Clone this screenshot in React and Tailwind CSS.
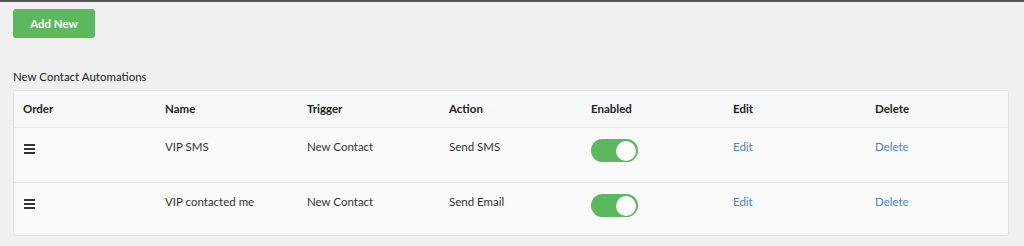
import React from 'react';

const rows = [
  { name: 'VIP SMS', trigger: 'New Contact', action: 'Send SMS' },
  { name: 'VIP contacted me', trigger: 'New Contact', action: 'Send Email' },
];

const Toggle = () => (
  <div className="w-[47px] h-[23px] rounded-full bg-[#5cb85c] flex items-center justify-end pr-[2px]">
    <div className="w-[20px] h-[20px] rounded-full bg-white" />
  </div>
);

const Grip = () => (
  <div className="flex flex-col gap-[2px] w-[11px]">
    <div className="h-[2px] bg-[#333]" />
    <div className="h-[2px] bg-[#333]" />
    <div className="h-[2px] bg-[#333]" />
  </div>
);

const App = () => {
  return (
    <div className="w-[1024px] h-[246px] bg-[#f0f0f0] border-t-2 border-[#555] font-['Lato','Liberation_Sans',sans-serif] text-[11.5px] text-[#333] overflow-hidden">
      {/* Toolbar */}
      <div className="px-[13px] pt-[7px]">
        <button className="w-[82px] h-[29px] bg-[#5cb85c] rounded-[3px] text-white font-bold text-[11.5px]">
          Add New
        </button>
      </div>

      <div className="px-[13px] mt-[31px] leading-[16px] text-[#222]">New Contact Automations</div>

      {/* Table card */}
      <div className="mx-[13px] mt-[5px] w-[996px] border border-[#e2e2e2] rounded-[3px] bg-[#fafafa]">
        <div className="grid grid-cols-7 h-[37px] items-center bg-[#f7f8fa] border-b border-[#e8e8e8] font-bold text-[#222]">
          {['Order', 'Name', 'Trigger', 'Action', 'Enabled', 'Edit', 'Delete'].map((h) => (
            <div key={h} className="pl-[9px]">{h}</div>
          ))}
        </div>
        {rows.map((r, i) => (
          <div
            key={r.name}
            className={`grid grid-cols-7 items-start pt-[11px] ${i === 0 ? 'h-[55px] border-b border-[#e8e8e8]' : 'h-[52px]'}`}
          >
            <div className="pl-[10px] pt-[5px]"><Grip /></div>
            <div className="pl-[9px] leading-[16px]">{r.name}</div>
            <div className="pl-[9px] leading-[16px]">{r.trigger}</div>
            <div className="pl-[9px] leading-[16px]">{r.action}</div>
            <div className="pl-[9px]"><Toggle /></div>
            <div className="pl-[9px] leading-[16px] text-[#4a86c8]">Edit</div>
            <div className="pl-[9px] leading-[16px] text-[#4a86c8]">Delete</div>
          </div>
        ))}
      </div>
    </div>
  );
};

export default App;
